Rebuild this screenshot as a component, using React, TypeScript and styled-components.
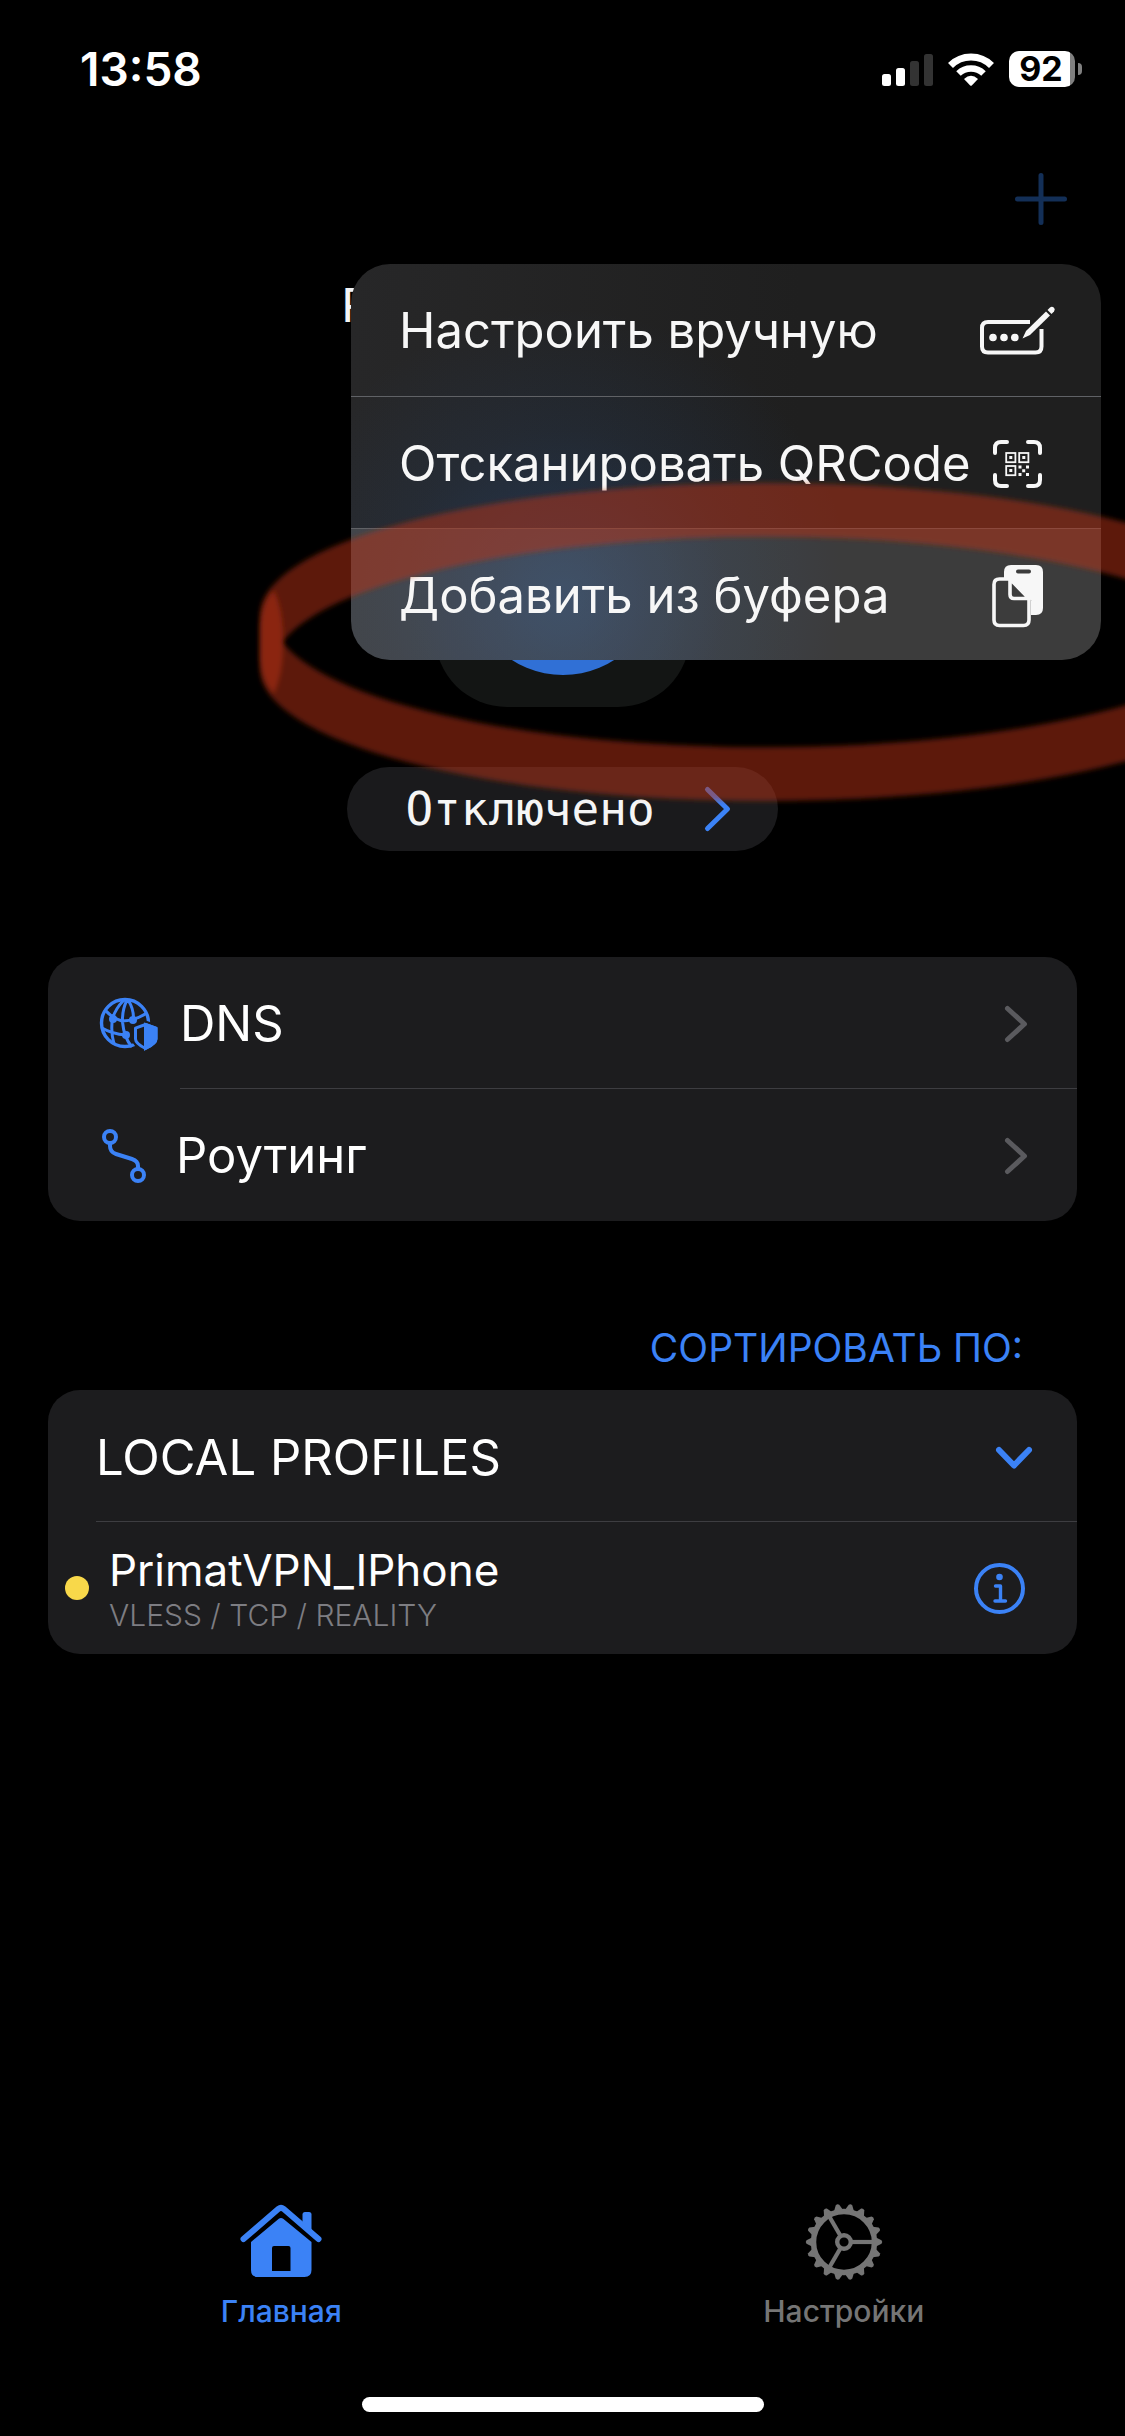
import React from "react";
import styled, { createGlobalStyle } from "styled-components";

const blue = "#3b82f6";
const surface = "#1c1c1e";
const sans = `Inter, "Liberation Sans", sans-serif`;
const mono = `"DejaVu Sans Mono", "Liberation Mono", monospace`;

const GlobalStyle = createGlobalStyle`
  * { box-sizing: border-box; }
  body { margin: 0; background: #000; color: #fff; font-family: ${sans}; }
  svg { display: block; flex: none; overflow: visible; }
`;

const PlainButton = styled.button`
  border: 0;
  margin: 0;
  padding: 0;
  background: none;
  color: inherit;
  font: inherit;
  text-align: left;
  cursor: pointer;
`;

const Page = styled.div`
  position: relative;
  display: flex;
  flex-direction: column;
  min-height: 100vh;
  overflow: hidden;
`;

const StatusBar = styled.div`
  display: flex;
  align-items: center;
  justify-content: space-between;
  height: 132px;
  padding: 6px 43px 0 80px;
`;

const Clock = styled.time`
  font-size: 46px;
  line-height: 54px;
  font-weight: 600;
`;

const StatusIcons = styled.div`
  display: flex;
  align-items: center;
  gap: 15px;
`;

const Battery = styled.div`
  display: flex;
  align-items: center;
  gap: 3px;
  &::after {
    content: "";
    width: 4px;
    height: 12px;
    border-radius: 0 6px 6px 0;
    background: #808080;
  }
`;

const BatteryLevel = styled.span`
  display: flex;
  align-items: center;
  justify-content: center;
  width: 66px;
  height: 36px;
  padding-right: 2px;
  border-radius: 10px;
  background: linear-gradient(to right, #fff 61px, #808080 61px);
  color: #000;
  font-size: 34px;
  line-height: 36px;
  font-weight: 700;
`;

const Toolbar = styled.header`
  display: flex;
  align-items: center;
  justify-content: flex-end;
  height: 132px;
  padding: 2px 58px 0;
`;

const Hero = styled.section`
  display: flex;
  flex-direction: column;
  align-items: center;
  padding-top: 12px;
`;

const ProfileTitle = styled.h1`
  margin: 0 0 116px;
  font: 400 46px/60px ${mono};
  color: #f5f5f5;
`;

const PowerButton = styled(PlainButton)`
  display: flex;
  align-items: center;
  justify-content: center;
  width: 255px;
  height: 255px;
  border-radius: 72px;
  background: #131514;
`;

const PowerDisc = styled.span`
  width: 190px;
  height: 190px;
  border-radius: 50%;
  background: #3070d6;
`;

const StatusPill = styled(PlainButton)`
  display: flex;
  align-items: center;
  gap: 50px;
  height: 84px;
  margin-top: 60px;
  padding: 0 48px 0 58px;
  border-radius: 42px;
  background: #1a1a1c;
  color: #f5f5f5;
  font: 400 46px/60px ${mono};
`;

const Menu = styled.div`
  position: absolute;
  top: 264px;
  right: 24px;
  width: 750px;
  max-width: calc(100% - 48px);
  overflow: hidden;
  border-radius: 39px;
  background:
    radial-gradient(circle at 211px 335px, rgba(36, 84, 150, 0.42), rgba(36, 84, 150, 0.12) 170px, transparent 290px),
    linear-gradient(to right, #272728, #1f1f1f 60%);
`;

const MenuItem = styled(PlainButton)<{ $active?: boolean }>`
  display: flex;
  align-items: center;
  justify-content: space-between;
  width: 100%;
  height: 132px;
  padding: 2px 46px 0 48px;
  background: ${(p) => (p.$active ? "rgba(255, 255, 255, 0.13)" : "none")};
  color: #f7f7f7;
  font-size: 49px;
  line-height: 60px;
  white-space: nowrap;
  & + & { border-top: 1px solid #606266; }
`;

const Main = styled.main`
  display: flex;
  flex-direction: column;
  padding: 106px 48px 0;
`;

const Card = styled.section`
  display: flex;
  flex-direction: column;
  border-radius: 32px;
  background: ${surface};
`;

const Row = styled(PlainButton)`
  display: flex;
  align-items: center;
  width: 100%;
  height: 132px;
  padding: 2px 50px 0;
  font-size: 49px;
  line-height: 60px;
`;

const RowLabel = styled.span`
  flex: 1;
  margin-left: 22px;
`;

const Divider = styled.hr<{ $inset: number }>`
  width: calc(100% - ${(p) => p.$inset}px);
  height: 1px;
  margin: -1px 0 0 ${(p) => p.$inset}px;
  border: 0;
  background: #3d3d41;
`;

const SortButton = styled(PlainButton)`
  align-self: flex-end;
  margin: 103px 54px 18px 0;
  color: ${blue};
  font-size: 39px;
  line-height: 48px;
`;

const GroupRow = styled(Row)`
  justify-content: space-between;
  padding: 4px 45px 0 48px;
`;

const ProfileRow = styled.div`
  display: flex;
  align-items: center;
  gap: 20px;
  height: 132px;
  padding: 0 52px 0 17px;
`;

const Dot = styled.span`
  width: 24px;
  height: 24px;
  border-radius: 50%;
  background: #f8d84a;
`;

const ProfileText = styled.div`
  display: flex;
  flex: 1;
  flex-direction: column;
  padding-top: 4px;
`;

const ProfileName = styled.span`
  font-size: 44px;
  line-height: 50px;
`;

const ProfileMeta = styled.span`
  color: #7d7d82;
  font-size: 30px;
  line-height: 40px;
  font-weight: 300;
`;

const TabBar = styled.nav`
  display: grid;
  grid-template-columns: 1fr 1fr;
  margin-top: auto;
`;

const Tab = styled.a<{ $active?: boolean }>`
  display: flex;
  flex-direction: column;
  align-items: center;
  gap: 12px;
  color: ${(p) => (p.$active ? blue : "#757575")};
  font-size: 30px;
  line-height: 36px;
  font-weight: 500;
  text-decoration: none;
`;

const HomeIndicator = styled.div`
  align-self: center;
  width: 402px;
  height: 15px;
  margin: 68px 0 24px;
  border-radius: 8px;
  background: #fff;
`;

const MarkerLayer = styled.svg`
  position: absolute;
  top: 0;
  left: 0;
  pointer-events: none;
`;

const SignalIcon = () => (
  <svg width="51" height="33" viewBox="0 0 51 33" aria-hidden="true">
    <rect x="0" y="21" width="9" height="12" rx="2.5" fill="#fff" />
    <rect x="14" y="15" width="9" height="18" rx="2.5" fill="#fff" />
    <rect x="28" y="8" width="9" height="25" rx="2.5" fill="#333" />
    <rect x="42" y="1" width="9" height="32" rx="2.5" fill="#333" />
  </svg>
);

const WifiIcon = () => (
  <svg width="46" height="33" viewBox="0 0 46 33" aria-hidden="true">
    <g fill="none" stroke="#fff" strokeWidth="7">
      <path d="M2.5 12.5A29 29 0 0 1 43.500 12.500" />
      <path d="M10.500 20.500A18 18 0 0 1 35.500 20.500" strokeWidth="6.500" />
    </g>
    <path d="M16 26Q23 19.500 30 26L23.800 32.400Q23 33.200 22.200 32.400Z" fill="#fff" />
  </svg>
);

const PlusIcon = () => (
  <svg width="52" height="52" viewBox="0 0 52 52" fill="none" stroke="#132f57" strokeWidth="5" strokeLinecap="round" aria-hidden="true">
    <path d="M26 2.500V49.500M2.500 26H49.500" />
  </svg>
);

const ManualIcon = () => (
  <svg width="75" height="50" viewBox="0 0 75 50" aria-hidden="true">
    <path d="M50 16H8Q2 16 2 22V40.500Q2 46.500 8 46.500H55.500Q61.500 46.500 61.500 40.500V23" fill="none" stroke="#f7f7f7" strokeWidth="4" />
    <g fill="#f7f7f7">
      <circle cx="13" cy="31.500" r="3.800" />
      <circle cx="24" cy="31.500" r="3.800" />
      <circle cx="34.800" cy="31.500" r="3.800" />
      <path d="M42.500 32.500L46 25L66 5.500L70 9.500L50 29Z" />
      <path d="M67.500 4L70 1.500Q72 0 74 1.800Q75.500 3.500 74 5.500L71.500 8Z" />
    </g>
  </svg>
);

const QrIcon = () => (
  <svg width="75" height="50" viewBox="0 0 75 50" aria-hidden="true">
    <path
      d="M15 14V9Q15 3 21 3H27M48 3H54Q60 3 60 9V14M60 36V41Q60 47 54 47H48M27 47H21Q15 47 15 41V36"
      fill="none" stroke="#f7f7f7" strokeWidth="4" strokeLinecap="round"
    />
    <g fill="none" stroke="#f7f7f7" strokeWidth="1.800">
      <rect x="26.200" y="14" width="9.200" height="9.200" />
      <rect x="39.200" y="14" width="9.200" height="9.200" />
      <rect x="26.200" y="27" width="9.200" height="9.200" />
    </g>
    <g fill="#f7f7f7">
      <path d="M29.300 17.100h3v3h-3zM42.300 17.100h3v3h-3zM29.300 30.100h3v3h-3z" />
      <path d="M38.500 26.500h3v3h-3zM46 26.500h3v3h-3zM42.200 30.200h3v3h-3zM38.500 34h3v3h-3zM46 34h3v3h-3z" />
    </g>
  </svg>
);

const ClipboardIcon = () => (
  <svg width="75" height="64" viewBox="0 0 75 64" aria-hidden="true">
    <path
      fillRule="evenodd" fill="#f7f7f7"
      d="M31 1H56Q63 1 63 8V44Q63 51 56 51H24V8Q24 1 31 1ZM38 5.500a2 2 0 0 0 0 4H49a2 2 0 0 0 0-4Z"
    />
    <path d="M20 14.500H29L51 36.500V63H20Z" fill="#3c3c3c" />
    <path
      d="M30 15H19.500Q14 15 14 20.500V56Q14 61.500 19.500 61.500H43.500Q49 61.500 49 56V34.500L30 15V30.500Q30 34.500 34 34.500H49"
      fill="none" stroke="#f7f7f7" strokeWidth="3.600" strokeLinejoin="round"
    />
  </svg>
);

const ChevronIcon = ({ height, width, color, stroke }: { height: number; width: number; color: string; stroke: number }) => (
  <svg width={width} height={height} viewBox={`0 0 ${width} ${height}`} fill="none" stroke={color} strokeWidth={stroke} strokeLinecap="round" strokeLinejoin="round" aria-hidden="true">
    <path d={`M${stroke / 2} ${stroke / 2}L${width - stroke / 2} ${height / 2}L${stroke / 2} ${height - stroke / 2}`} />
  </svg>
);

const DnsIcon = () => (
  <svg width="60" height="56" viewBox="0 0 60 56" fill="none" stroke={blue} strokeWidth="3" aria-hidden="true">
    <circle cx="27" cy="27" r="23.500" strokeWidth="3.400" />
    <path d="M26 4Q17 13 14.500 23Q12.500 36 16 48M29 4Q24 14 24.500 26Q26 42 34 51M30 4Q36 13 35.500 24M7 14Q14 22 24 25Q36 25 49 17M4 32Q14 38 28 39" />
    <g fill={blue} stroke="none">
      <circle cx="15" cy="23" r="4" />
      <circle cx="35" cy="24" r="4" />
      <circle cx="28" cy="39" r="4" />
    </g>
    <path d="M47.500 27L59 31V43Q59 48 47.500 54Q36 48 36 43V31Z" fill={surface} stroke={surface} strokeWidth="5" />
    <path d="M47.500 28.500L58 32.200V43Q58 47.500 47.500 52.500Q37.500 47.500 37.500 43V32.200Z" strokeLinejoin="round" />
    <path d="M47.500 28.500L58 32.200V43Q58 47.500 47.500 52.500Z" fill={blue} />
  </svg>
);

const RouteIcon = () => (
  <svg width="56" height="56" viewBox="0 0 56 56" fill="none" stroke={blue} strokeWidth="4" aria-hidden="true">
    <circle cx="12" cy="9" r="6" />
    <circle cx="40" cy="47" r="6" />
    <path d="M12 15V18Q12 24 18 26L34 31Q40 33 40 38V41" />
  </svg>
);

const ChevronDownIcon = () => (
  <svg width="36" height="22" viewBox="0 0 36 22" fill="none" stroke={blue} strokeWidth="6" strokeLinecap="round" strokeLinejoin="round" aria-hidden="true">
    <path d="M3 3L18 18.500L33 3" />
  </svg>
);

const InfoIcon = () => (
  <svg width="51" height="51" viewBox="0 0 51 51" fill="none" stroke={blue} strokeWidth="4" strokeLinecap="round" strokeLinejoin="round" aria-hidden="true">
    <circle cx="25.500" cy="25.500" r="23.500" />
    <path d="M21.500 23H26.500V37.500M21 38H31.500" strokeWidth="3.400" />
    <circle cx="25.500" cy="14" r="3.300" fill={blue} stroke="none" />
  </svg>
);

const HomeIcon = () => (
  <svg width="82" height="78" viewBox="0 0 82 78" aria-hidden="true">
    <path d="M3.500 36L38.500 5.800Q41 3.800 43.500 5.800L78.500 36" fill="none" stroke="currentColor" strokeWidth="6" strokeLinecap="round" />
    <path d="M62.500 23V11.500Q62.500 9 65 9H69Q71.500 9 71.500 11.500V31Z" fill="currentColor" />
    <path
      fillRule="evenodd" fill="currentColor"
      d="M38.800 15.800Q41 14 43.200 15.800L71.500 39V67Q71.500 74 64.500 74H18Q11 74 11 67V39ZM34 43Q32 43 32 45V68H50.500V45Q50.500 43 48.500 43Z"
    />
  </svg>
);

const TEETH = Array.from({ length: 18 }, (_, i) => i * 20);

const GearIcon = () => (
  <svg width="78" height="78" viewBox="-39 -39 78 78" fill="none" stroke="currentColor" aria-hidden="true">
    <circle r="30.500" strokeWidth="5.500" />
    <circle r="6.800" strokeWidth="4.400" />
    {[0, 120, 240].map((a) => (
      <path key={a} d="M8 0H30" strokeWidth="4.200" transform={`rotate(${a})`} />
    ))}
    {TEETH.map((a) => (
      <path key={a} d="M32 -4.500L37.500 -1.800Q39 0 37.500 1.800L32 4.500Z" fill="currentColor" stroke="none" transform={`rotate(${a})`} />
    ))}
  </svg>
);

const Marker = () => (
  <MarkerLayer width="1300" height="840" viewBox="0 0 1300 840" aria-hidden="true">
    <defs>
      <filter id="soft-edge" x="-5%" y="-10%" width="110%" height="120%">
        <feGaussianBlur stdDeviation="2.500" />
      </filter>
    </defs>
    <g fill="rgb(182, 51, 20)" fillOpacity="0.51">
      <path filter="url(#soft-edge)" d="M1270 615A505 132 0 0 0 260 615V658Q262 682 274 694Q284 672 283 641A493 132 0 0 1 1258 669H1270Z" />
      <path filter="url(#soft-edge)" d="M1270 669A505 132 0 0 1 260 669V626Q262 602 274 590Q284 612 283 643A493 132 0 0 0 1258 615H1270Z" />
    </g>
  </MarkerLayer>
);

export default function App() {
  return (
    <Page>
      <GlobalStyle />
      <StatusBar>
        <Clock>13:58</Clock>
        <StatusIcons>
          <SignalIcon />
          <WifiIcon />
          <Battery>
            <BatteryLevel>92</BatteryLevel>
          </Battery>
        </StatusIcons>
      </StatusBar>
      <Toolbar>
        <PlainButton aria-label="Добавить">
          <PlusIcon />
        </PlainButton>
      </Toolbar>
      <Hero>
        <ProfileTitle>PrimatVPN_IPhone</ProfileTitle>
        <PowerButton aria-label="Подключить">
          <PowerDisc />
        </PowerButton>
        <StatusPill>
          Отключено
          <ChevronIcon width={25} height={44} color={blue} stroke={5} />
        </StatusPill>
      </Hero>
      <Main>
        <Card>
          <Row>
            <DnsIcon />
            <RowLabel>DNS</RowLabel>
            <ChevronIcon width={22} height={36} color="#5a5a5e" stroke={5} />
          </Row>
          <Divider $inset={132} />
          <Row>
            <RouteIcon />
            <RowLabel>Роутинг</RowLabel>
            <ChevronIcon width={22} height={36} color="#5a5a5e" stroke={5} />
          </Row>
        </Card>
        <SortButton>СОРТИРОВАТЬ ПО:</SortButton>
        <Card>
          <GroupRow>
            LOCAL PROFILES
            <ChevronDownIcon />
          </GroupRow>
          <Divider $inset={48} />
          <ProfileRow>
            <Dot />
            <ProfileText>
              <ProfileName>PrimatVPN_IPhone</ProfileName>
              <ProfileMeta>VLESS / TCP / REALITY</ProfileMeta>
            </ProfileText>
            <PlainButton aria-label="Информация">
              <InfoIcon />
            </PlainButton>
          </ProfileRow>
        </Card>
      </Main>
      <TabBar>
        <Tab href="#home" $active>
          <HomeIcon />
          Главная
        </Tab>
        <Tab href="#settings">
          <GearIcon />
          Настройки
        </Tab>
      </TabBar>
      <HomeIndicator />
      <Menu role="menu">
        <MenuItem role="menuitem">
          Настроить вручную
          <ManualIcon />
        </MenuItem>
        <MenuItem role="menuitem">
          Отсканировать QRCode
          <QrIcon />
        </MenuItem>
        <MenuItem role="menuitem" $active>
          Добавить из буфера
          <ClipboardIcon />
        </MenuItem>
      </Menu>
      <Marker />
    </Page>
  );
}
